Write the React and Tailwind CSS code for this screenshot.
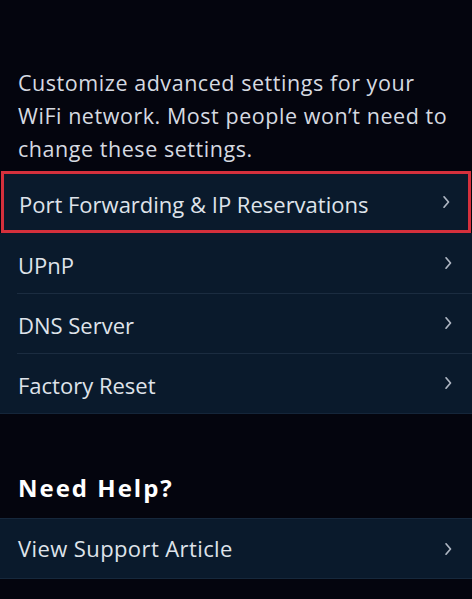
import React from "react";

function Chevron() {
  return (
    <svg width="10" height="14" viewBox="0 0 10 14" className="shrink-0">
      <path d="M3 1.8 L7.5 7 L3 12.2" fill="none" stroke="#aeb6c2" strokeWidth="1.7" strokeLinecap="round" strokeLinejoin="round" />
    </svg>
  );
}

function Row({ label, highlight, sep }) {
  return (
    <div className="relative">
      {sep && <div className="absolute top-0 left-[17px] right-0 h-[1px] bg-[#1b2c40]" />}
      <div
        className={
          highlight
            ? "flex h-[62px] items-center justify-between border-[3px] border-[#d5303c] bg-[#0a1a2c] pl-[15px] pr-[17px] mx-[1px]"
            : "flex h-[60px] items-center justify-between bg-[#0a1a2c] pl-[18px] pr-[19px]"
        }
      >
        <span className="text-[22px] tracking-[0px] text-[#dfe3ea] pt-[5px]">{label}</span>
        <Chevron />
      </div>
    </div>
  );
}

export default function App() {
  return (
    <div
      className="w-[472px] h-[599px] overflow-hidden bg-[#04050e]"
      style={{ fontFamily: '"Open Sans", "Noto Sans", sans-serif' }}
    >
      <div className="pt-[66px] pl-[18px] pr-[2px] pb-[6px]">
        <p className="text-[21.5px] tracking-[0.55px] leading-[33px] text-[#d6dae1] whitespace-nowrap">
          Customize advanced settings for your
          <br />
          WiFi network. Most people won’t need to
          <br />
          change these settings.
        </p>
      </div>
      <Row label="Port Forwarding & IP Reservations" highlight />
      <Row label="UPnP" />
      <Row label="DNS Server" sep />
      <Row label="Factory Reset" sep />
      <div className="h-[1px] bg-[#15263a]" />
      <div className="pt-[58px] pb-[14px] px-[18px]">
        <h2 className="text-[24px] tracking-[2px] font-bold text-white leading-[32px]">Need Help?</h2>
      </div>
      <div className="border-y border-[#16283c] bg-[#0a1a2c] flex h-[61px] items-center justify-between pl-[18px] pr-[19px]">
        <span className="text-[22px] tracking-[0.4px] text-[#dfe3ea]">View Support Article</span>
        <Chevron />
      </div>
    </div>
  );
}
